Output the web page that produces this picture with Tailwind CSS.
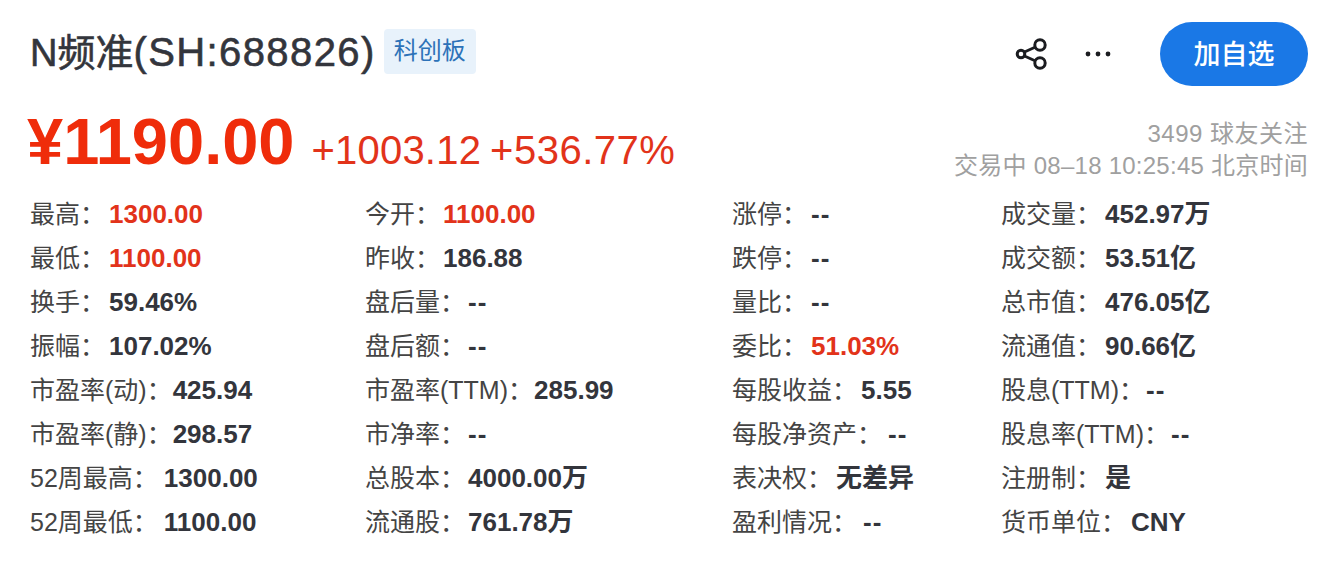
<!DOCTYPE html>
<html lang="en">
<head>
  <meta charset="UTF-8" />
  <title>N频准(SH:688826)</title>
  <script src="https://cdn.jsdelivr.net/npm/@tailwindcss/browser@4"></script>
</head>
<body class="bg-white h-[564px] overflow-hidden font-['Liberation_Sans','Noto_Sans_CJK_SC',sans-serif] text-[#33353c]">
  <div class="pl-[30px] pr-[24px] pt-[22px]">
    <!-- Title row -->
    <div class="flex items-center h-[64px]">
      <h1 class="text-[38px] leading-[50px] font-normal mt-[-4px] [-webkit-text-stroke:0.6px_#33353c]">N频准<span class="text-[40px] tracking-[1.4px]">(SH:688826)</span></h1>
      <span class="ml-[8px] mt-[-6px] w-[92px] h-[45px] flex items-center justify-center rounded-[4px] bg-[#e8f2fb] text-[#2d72b8] text-[24px]">科创板</span>
      <div class="ml-auto flex items-center">
        <svg class="w-[32px] h-[32px]" viewBox="0 0 32 32" fill="none" stroke="#1b1c20" stroke-width="3">
          <circle cx="25" cy="7" r="5.2" />
          <circle cx="25" cy="25" r="5.2" />
          <circle cx="6" cy="16" r="3.8" />
          <path d="M9.5 14 L20.5 9 M9.5 18 L20.5 23" />
        </svg>
        <svg class="ml-[38px] w-[26px] h-[8px]" viewBox="0 0 26 8" fill="#1b1c20">
          <circle cx="3" cy="4" r="2.4" />
          <circle cx="13" cy="4" r="2.4" />
          <circle cx="23" cy="4" r="2.4" />
        </svg>
        <button class="ml-[49px] w-[148px] h-[64px] rounded-full bg-[#1a78e6] text-white text-[27px] font-medium pt-[2px]">加自选</button>
      </div>
    </div>

    <!-- Price row -->
    <div class="flex items-end justify-between mt-[15px] h-[76px]">
      <div class="flex items-baseline text-[#ef2c0a] mt-[3px]">
        <span class="text-[65px] leading-[76px] font-bold ml-[-3px] translate-y-[3px]">¥1190.00</span>
        <span class="ml-[17px] text-[40px] leading-[50px] text-[#e2331a] tracking-[0.2px] translate-y-[3px]">+1003.12</span>
        <span class="ml-[9px] text-[40px] leading-[50px] text-[#e2331a] tracking-[0.5px] translate-y-[3px]">+536.77%</span>
      </div>
      <div class="text-right text-[24px] leading-[32px] tracking-[0.25px] text-[#a0a0a0] mb-[-5px]">
        <div class="tracking-[0.5px]">3499 球友关注</div>
        <div>交易中 08–18 10:25:45 北京时间</div>
      </div>
    </div>

    <!-- Quote grid -->
    <div class="grid grid-cols-[335px_367px_269px_1fr] auto-rows-[44px] mt-[15px] text-[25px] leading-[44px] text-[#444] [&_b]:text-[26px]">
      <div>最高：<b class="ml-1 text-[#e2331a]">1300.00</b></div>
      <div>今开：<b class="ml-[3px] text-[#e2331a]">1100.00</b></div>
      <div>涨停：<b class="ml-1 text-[#33353c] tracking-[1px]">--</b></div>
      <div>成交量：<b class="ml-1 text-[#33353c]">452.97万</b></div>

      <div>最低：<b class="ml-1 text-[#e2331a]">1100.00</b></div>
      <div>昨收：<b class="ml-[3px] text-[#33353c]">186.88</b></div>
      <div>跌停：<b class="ml-1 text-[#33353c] tracking-[1px]">--</b></div>
      <div>成交额：<b class="ml-1 text-[#33353c]">53.51亿</b></div>

      <div>换手：<b class="ml-1 text-[#33353c]">59.46%</b></div>
      <div>盘后量：<b class="ml-[3px] text-[#33353c] tracking-[1px]">--</b></div>
      <div>量比：<b class="ml-1 text-[#33353c] tracking-[1px]">--</b></div>
      <div>总市值：<b class="ml-1 text-[#33353c]">476.05亿</b></div>

      <div>振幅：<b class="ml-1 text-[#33353c]">107.02%</b></div>
      <div>盘后额：<b class="ml-[3px] text-[#33353c] tracking-[1px]">--</b></div>
      <div>委比：<b class="ml-1 text-[#e2331a]">51.03%</b></div>
      <div>流通值：<b class="ml-1 text-[#33353c]">90.66亿</b></div>

      <div>市盈率(动)：<b class="ml-[1px] text-[#33353c]">425.94</b></div>
      <div>市盈率(TTM)：<b class="ml-[1px] text-[#33353c]">285.99</b></div>
      <div>每股收益：<b class="ml-1 text-[#33353c]">5.55</b></div>
      <div>股息(TTM)：<b class="ml-[2px] text-[#33353c] tracking-[1px]">--</b></div>

      <div>市盈率(静)：<b class="ml-[1px] text-[#33353c]">298.57</b></div>
      <div>市净率：<b class="ml-[3px] text-[#33353c] tracking-[1px]">--</b></div>
      <div>每股净资产：<b class="ml-[6px] text-[#33353c] tracking-[1px]">--</b></div>
      <div>股息率(TTM)：<b class="ml-[2px] text-[#33353c] tracking-[1px]">--</b></div>

      <div>52周最高：<b class="ml-[6px] text-[#33353c]">1300.00</b></div>
      <div>总股本：<b class="ml-[3px] text-[#33353c]">4000.00万</b></div>
      <div>表决权：<b class="ml-1 text-[#33353c]">无差异</b></div>
      <div>注册制：<b class="ml-1 text-[#33353c]">是</b></div>

      <div>52周最低：<b class="ml-[6px] text-[#33353c]">1100.00</b></div>
      <div>流通股：<b class="ml-[3px] text-[#33353c]">761.78万</b></div>
      <div>盈利情况：<b class="ml-[6px] text-[#33353c] tracking-[1px]">--</b></div>
      <div>货币单位：<b class="ml-[5px] text-[#33353c]">CNY</b></div>
    </div>
  </div>
</body>
</html>
